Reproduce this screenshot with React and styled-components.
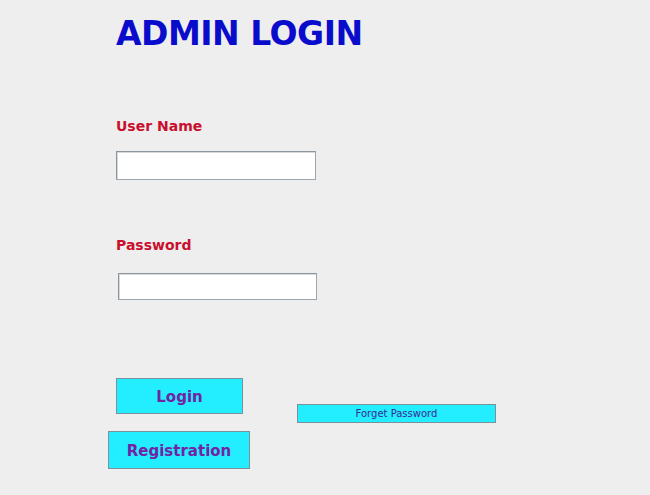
import React from 'react';
import styled, { createGlobalStyle } from 'styled-components';

const GlobalStyle = createGlobalStyle`
  html, body {
    margin: 0;
    padding: 0;
    background: #eeeeee;
    font-family: "DejaVu Sans", Verdana, sans-serif;
  }
`;

const Page = styled.div`
  min-height: 495px;
  box-sizing: border-box;
  padding: 14px 0 0 116px;
  display: flex;
  flex-direction: column;
  align-items: flex-start;
`;

const Title = styled.h1`
  margin: 0;
  font-size: 33px;
  line-height: 40px;
  letter-spacing: -0.5px;
  font-weight: bold;
  color: #0a0ccc;
`;

const Label = styled.label`
  display: block;
  margin-top: ${(p) => p.$top}px;
  font-size: 14px;
  line-height: 18px;
  font-weight: bold;
  color: #c8102e;
`;

const TextInput = styled.input`
  box-sizing: border-box;
  width: ${(p) => p.$w}px;
  height: ${(p) => p.$h}px;
  margin: ${(p) => p.$top}px 0 0 ${(p) => p.$left || 0}px;
  padding: 2px 4px;
  background: #fff;
  border: 1px solid #9ea6ad;
  border-top-color: #8d959c;
  border-left-color: #8d959c;
  box-shadow: inset 1px 1px 0 #d6d9dc;
  font-family: inherit;
  font-size: 13px;
  outline: none;
`;

const ButtonRow = styled.div`
  display: flex;
  align-items: flex-start;
  margin-top: 78px;
`;

const BigButton = styled.button`
  box-sizing: border-box;
  width: ${(p) => p.$w}px;
  height: ${(p) => p.$h}px;
  margin: ${(p) => p.$top || 0}px 0 0 ${(p) => p.$left || 0}px;
  padding: 2px 0 0;
  background: #22eeff;
  border: 1px solid #7d8f99;
  font-family: inherit;
  font-size: 15px;
  font-weight: bold;
  color: #7323a3;
  cursor: pointer;
`;

const SmallButton = styled.button`
  box-sizing: border-box;
  width: 199px;
  height: 19px;
  margin: 26px 0 0 54px;
  padding: 1px 0 0;
  background: #22eeff;
  border: 1px solid #7d8f99;
  font-family: inherit;
  font-size: 10px;
  line-height: 16px;
  color: #3b2a92;
  cursor: pointer;
`;

export default function App() {
  return (
    <>
      <GlobalStyle />
      <Page>
        <Title>ADMIN LOGIN</Title>

        <Label $top={63} htmlFor="uname">User Name</Label>
        <TextInput id="uname" type="text" $w={200} $h={29} $top={16} />

        <Label $top={56} htmlFor="pwd">Password</Label>
        <TextInput id="pwd" type="password" $w={199} $h={27} $top={19} $left={2} />

        <ButtonRow>
          <BigButton $w={127} $h={36}>Login</BigButton>
          <SmallButton>Forget Password</SmallButton>
        </ButtonRow>
        <BigButton $w={142} $h={38} $top={8} $left={-8}>Registration</BigButton>
      </Page>
    </>
  );
}
